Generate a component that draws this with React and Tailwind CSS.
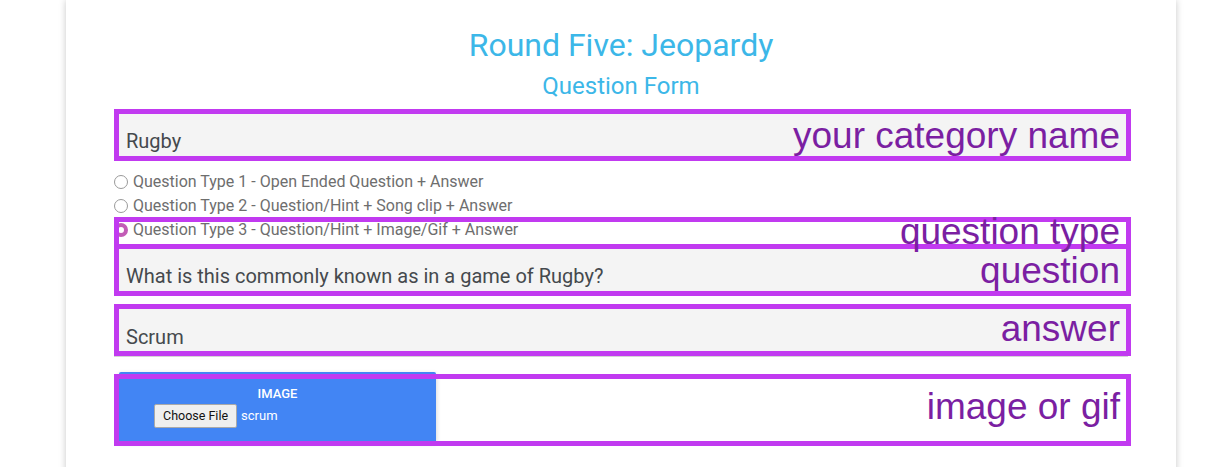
import React from "react";

// Annotated screenshot of a quiz question form: each annotated part of the
// form carries its own purple callout drawn over it.

const QUESTION_TYPES = [
  { label: "Question Type 1 - Open Ended Question + Answer", checked: false },
  { label: "Question Type 2 - Question/Hint + Song clip + Answer", checked: false },
  { label: "Question Type 3 - Question/Hint + Image/Gif + Answer", checked: true },
];

const Field = ({ value, className = "" }) => (
  <div className={`bg-[#f4f4f4] px-3 text-[20px] leading-[24px] text-[#45494d] ${className}`}>
    {value}
  </div>
);

const Radio = ({ label, checked }) => (
  <div className="flex items-center h-[24px] gap-[5px]">
    {checked ? (
      <span className="w-[14px] h-[14px] rounded-full border-[4px] border-[#c25cb6] bg-white shrink-0" />
    ) : (
      <span className="w-[14px] h-[14px] rounded-full border border-[#9a9a9a] bg-white shrink-0" />
    )}
    <span className="text-[16px] text-[#6e6e6e]">{label}</span>
  </div>
);

// children in flow; frame + label lie over them (and over neighbours)
const Annotated = ({ label, frame, labelPos, children }) => (
  <div className="relative">
    {children}
    <div className={`absolute z-10 left-0 -right-[3px] border-[5px] border-[#c13af0] pointer-events-none ${frame}`} />
    <span
      className={`absolute z-20 right-[8px] text-[37px] leading-none text-[#7b1fa2] whitespace-nowrap pointer-events-none ${labelPos}`}
      style={{ fontFamily: '"Liberation Sans", Arial, sans-serif' }}
    >
      {label}
    </span>
  </div>
);

export default function App() {
  return (
    <div className="h-[467px] overflow-hidden bg-white" style={{ fontFamily: "Roboto, sans-serif" }}>
      {/* Card */}
      <div className="ml-[66px] w-[1110px] min-h-[480px] bg-white shadow-[0_0_7px_rgba(0,0,0,0.22)] px-12 pt-[25px]">
        <h1 className="text-center text-[32px] leading-[40px] text-[#3cb7e8]">Round Five: Jeopardy</h1>
        <h2 className="text-center text-[24px] leading-[28px] text-[#3cb7e8] mt-[7px]">Question Form</h2>

        <div className="mt-[12px]">
          <Annotated label="your category name" frame="-top-[3px] bottom-0" labelPos="top-[5px]">
            <Field value="Rugby" className="h-[49px] pt-[17px] border-b border-[#d4d4d4]" />
          </Annotated>
        </div>

        <div className="mt-[9px]">
          <Radio label={QUESTION_TYPES[0].label} checked={QUESTION_TYPES[0].checked} />
          <Radio label={QUESTION_TYPES[1].label} checked={QUESTION_TYPES[1].checked} />
          <Annotated label="question type" frame="-top-[1px] -bottom-[7px]" labelPos="-top-[5px]">
            <Radio label={QUESTION_TYPES[2].label} checked={QUESTION_TYPES[2].checked} />
          </Annotated>
        </div>

        <div className="mt-[2px] flex flex-col gap-[12px]">
          <Annotated label="question" frame="top-0 -bottom-[2px]" labelPos="top-[8px]">
            <Field value="What is this commonly known as in a game of Rugby?" className="h-[50px] pt-[20px]" />
          </Annotated>

          <Annotated label="answer" frame="-top-[2px] bottom-[1px]" labelPos="top-[4px]">
            <Field value="Scrum" className="h-[51px] pt-[19px] border-b border-[#d4d4d4]" />
          </Annotated>
        </div>

        {/* Image upload */}
        <div className="mt-[15px]">
          <Annotated label="image or gif" frame="top-[2px] -bottom-[5px]" labelPos="top-[16px]">
            <div className="ml-[5px] w-[317px] h-[69px] bg-[#4285f4] rounded-t-[2px] shadow-[0_2px_5px_rgba(0,0,0,0.2)] pt-[14px]">
              <p className="text-center text-white text-[13px] leading-[16px] font-medium">IMAGE</p>
              <div className="flex items-center gap-[4px] pl-[35px] mt-[2px]">
                <button className="h-[24px] px-[8px] bg-[#efefef] border border-[#a9a9a9] rounded-[2px] text-[12.5px] text-[#111]">
                  Choose File
                </button>
                <span className="text-white text-[13px]">scrum</span>
              </div>
            </div>
          </Annotated>
        </div>
      </div>
    </div>
  );
}
